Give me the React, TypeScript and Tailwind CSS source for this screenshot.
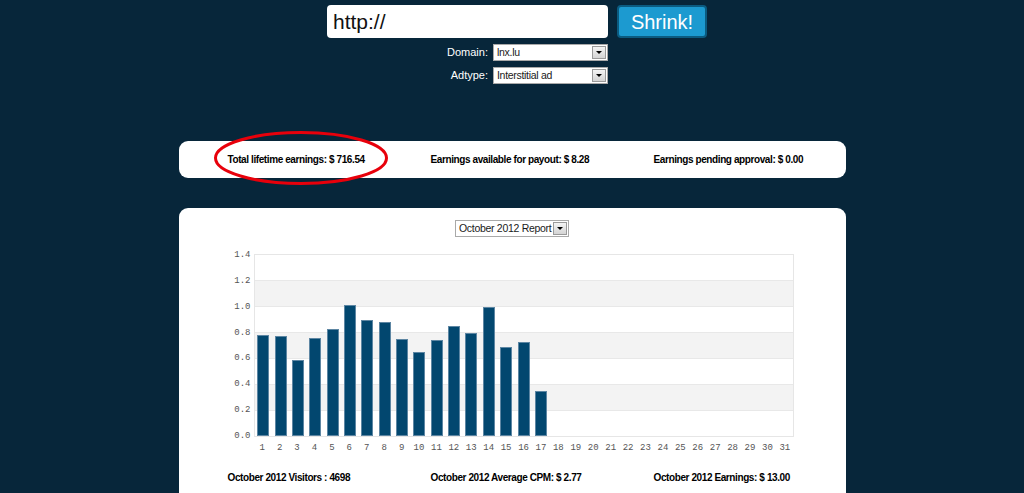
const bars = [0.78, 0.775, 0.59, 0.76, 0.83, 1.015, 0.9, 0.88, 0.75, 0.65, 0.74, 0.85, 0.8, 1.0, 0.69, 0.73, 0.35];
const days = Array.from({ length: 31 }, (_, i) => i + 1);
const yLabels = ["1.4", "1.2", "1.0", "0.8", "0.6", "0.4", "0.2", "0.0"];

function Select({ value, width }: { value: string; width: string }) {
  return (
    <div className={`flex h-[17px] items-center justify-between border border-[#a9a9a9] bg-white pl-[3px] ${width}`}>
      <span className="whitespace-nowrap text-[10.5px] leading-none tracking-[-0.3px] text-[#1a1a1a]">{value}</span>
      <span className="mr-px flex h-[13px] w-[14px] shrink-0 items-center justify-center border border-[#9a9a9a] bg-gradient-to-b from-[#f4f4f4] to-[#d4d4d4]">
        <span className="h-0 w-0 border-x-[3px] border-t-[3px] border-x-transparent border-t-black" />
      </span>
    </div>
  );
}

function Stats({ items }: { items: string[] }) {
  return (
    <div className="grid grid-cols-[203px_223px_auto] pl-[49px] text-[10px] font-bold tracking-[-0.4px] text-black">
      {items.map((t) => (
        <span key={t} className="whitespace-nowrap">{t}</span>
      ))}
    </div>
  );
}

export default function App() {
  return (
    <div className="min-h-[493px] overflow-hidden bg-[#07263a] font-['Liberation_Sans',Arial,sans-serif]">
      {/* shrink form */}
      <div className="flex gap-[9px] pl-[327px] pt-[5px]">
        <div className="flex h-[33px] w-[281px] items-center rounded-[4px] bg-white pl-[6px] text-[21px] text-[#111]">http://</div>
        <button className="h-[33px] w-[90px] rounded-[4px] border-2 border-[#0b5b80] bg-[#1c9ad0] text-[20px] leading-none text-white">Shrink!</button>
      </div>
      <div className="mt-[6px] flex flex-col gap-[6px] pl-[440px]">
        <div className="flex items-center">
          <span className="w-[48px] text-right text-[11px] text-white">Domain:</span>
          <div className="ml-[5px]"><Select value="lnx.lu" width="w-[115px]" /></div>
        </div>
        <div className="flex items-center">
          <span className="w-[48px] text-right text-[11px] text-white">Adtype:</span>
          <div className="ml-[5px]"><Select value="Interstitial ad" width="w-[115px]" /></div>
        </div>
      </div>

      {/* earnings summary */}
      <div className="relative mx-auto mt-[57px] flex h-[37px] w-[667px] items-center rounded-[9px] bg-white">
        <Stats items={["Total lifetime earnings: $ 716.54", "Earnings available for payout: $ 8.28", "Earnings pending approval: $ 0.00"]} />
        <svg className="absolute left-[34px] top-[-11px]" width="176" height="56" viewBox="0 0 176 56">
          <ellipse cx="88" cy="28" rx="85.5" ry="25.5" fill="none" stroke="#e8000b" strokeWidth="3" />
        </svg>
      </div>

      {/* report */}
      <div className="mx-auto mt-[30px] h-[300px] w-[667px] rounded-t-[9px] bg-white pt-[12px]">
        <div className="flex justify-center">
          <Select value="October 2012 Report" width="w-[114px]" />
        </div>
        <div className="mt-[11px] flex pl-[52px]">
          <div className="flex h-[194px] w-[20px] flex-col justify-between pt-px font-['Liberation_Mono',monospace] text-[9px] leading-[12px] text-[#555]">
            {yLabels.map((l) => (
              <span key={l} className="text-right">{l}</span>
            ))}
          </div>
          <div className="ml-[3px] mt-[6px]">
            <div className="relative h-[183px] w-[540px] border border-[#e6e6e6]">
              <div className="absolute inset-0 flex flex-col">
                {[0, 1, 2, 3, 4, 5, 6].map((i) => (
                  <div key={i} className={`flex-1 border-b border-[#e8e8e8] last:border-b-0 ${i % 2 ? "bg-[#f3f3f3]" : "bg-white"}`} />
                ))}
              </div>
              <div className="relative flex h-full items-end">
                {days.map((d, i) => (
                  <div key={d} className="flex h-full flex-1 items-end justify-center">
                    {bars[i] !== undefined && (
                      <div className="w-[12px] border border-[#5d86a3] bg-[#02476f]" style={{ height: `${(bars[i] / 1.4) * 100}%` }} />
                    )}
                  </div>
                ))}
              </div>
            </div>
            <div className="mt-[7px] flex font-['Liberation_Mono',monospace] text-[9px] leading-none text-[#555]">
              {days.map((d) => (
                <span key={d} className="flex-1 text-center">{d}</span>
              ))}
            </div>
          </div>
        </div>
        <div className="mt-[17px]">
          <Stats items={["October 2012 Visitors : 4698", "October 2012 Average CPM: $ 2.77", "October 2012 Earnings: $ 13.00"]} />
        </div>
      </div>
    </div>
  );
}
